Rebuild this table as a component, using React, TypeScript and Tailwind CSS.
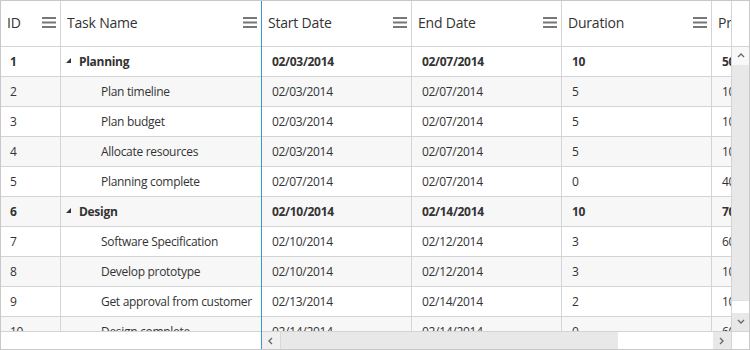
import React from "react";

type Row = {
  id: number;
  name: string;
  start: string;
  end: string;
  dur: string;
  prog: string;
  parent?: boolean;
};

const rows: Row[] = [
  { id: 1, name: "Planning", start: "02/03/2014", end: "02/07/2014", dur: "10", prog: "50", parent: true },
  { id: 2, name: "Plan timeline", start: "02/03/2014", end: "02/07/2014", dur: "5", prog: "100" },
  { id: 3, name: "Plan budget", start: "02/03/2014", end: "02/07/2014", dur: "5", prog: "100" },
  { id: 4, name: "Allocate resources", start: "02/03/2014", end: "02/07/2014", dur: "5", prog: "100" },
  { id: 5, name: "Planning complete", start: "02/07/2014", end: "02/07/2014", dur: "0", prog: "40" },
  { id: 6, name: "Design", start: "02/10/2014", end: "02/14/2014", dur: "10", prog: "70", parent: true },
  { id: 7, name: "Software Specification", start: "02/10/2014", end: "02/12/2014", dur: "3", prog: "60" },
  { id: 8, name: "Develop prototype", start: "02/10/2014", end: "02/12/2014", dur: "3", prog: "100" },
  { id: 9, name: "Get approval from customer", start: "02/13/2014", end: "02/14/2014", dur: "2", prog: "100" },
  { id: 10, name: "Design complete", start: "02/14/2014", end: "02/14/2014", dur: "0", prog: "60" },
];

function Menu() {
  return (
    <svg width="14" height="11" viewBox="0 0 14 11" className="shrink-0 -mt-[2px]">
      <rect x="0" y="0" width="14" height="2" fill="#777777" />
      <rect x="0" y="4.5" width="14" height="2" fill="#777777" />
      <rect x="0" y="9" width="14" height="2" fill="#777777" />
    </svg>
  );
}

function HeaderCell({ label, className }: { label: string; className: string }) {
  return (
    <div className={`flex items-center justify-between h-full pl-[6px] pr-[4px] border-r border-[#d4d4d4] shrink-0 ${className}`}>
      <span className="text-[14px] tracking-[-0.2px] text-[#333333] whitespace-nowrap overflow-hidden -mt-[2px]">{label}</span>
      <Menu />
    </div>
  );
}

function Chevron({ dir }: { dir: "up" | "down" | "left" | "right" }) {
  const pts: Record<string, string> = {
    up: "1,5 4,2 7,5",
    down: "1,2 4,5 7,2",
    left: "5,1 2,4 5,7",
    right: "2,1 5,4 2,7",
  };
  return (
    <svg width="8" height="8" viewBox="0 0 8 8">
      <polyline points={pts[dir]} fill="none" stroke="#6a6a6a" strokeWidth="1.4" />
    </svg>
  );
}

export default function App() {
  const rowBg = (i: number) => (i % 2 === 1 ? "bg-[#f7f7f7]" : "bg-white");
  return (
    <div
      className="w-[750px] h-[350px] border border-[#c8c8c8] flex bg-white text-[#333333]"
      style={{ fontFamily: '"Open Sans", "Noto Sans", sans-serif' }}
    >
      {/* Frozen left pane */}
      <div className="w-[261px] shrink-0 flex flex-col border-r border-[#3a94d8]">
        <div className="h-[46px] shrink-0 flex border-b border-[#d4d4d4]">
          <HeaderCell label="ID" className="w-[60px]" />
          <div className="flex items-center justify-between h-full pl-[6px] pr-[4px] flex-1">
            <span className="text-[14px] tracking-[-0.2px] text-[#333333] -mt-[2px]">Task Name</span>
            <Menu />
          </div>
        </div>
        <div className="flex-1 overflow-hidden">
          {rows.map((r, i) => (
            <div key={r.id} className={`h-[30px] flex border-b border-[#d4d4d4] text-[12px] tracking-[-0.3px] ${rowBg(i)} ${r.parent ? "font-bold" : ""}`}>
              <div className="w-[60px] shrink-0 border-r border-[#d4d4d4] flex items-center pl-[9px]">{r.id}</div>
              {r.parent ? (
                <div className="flex-1 flex items-center pl-[5px]">
                  <svg width="5" height="5" viewBox="0 0 5 5" className="mr-[8px] -mt-[2px]">
                    <polygon points="5,0 5,5 0,5" fill="#333333" />
                  </svg>
                  <span>{r.name}</span>
                </div>
              ) : (
                <div className="flex-1 flex items-center pl-[40px] whitespace-nowrap">{r.name}</div>
              )}
            </div>
          ))}
        </div>
        <div className="h-[18px] shrink-0 border-t border-[#d4d4d4] bg-white" />
      </div>

      {/* Movable right pane */}
      <div className="flex-1 flex flex-col min-w-0">
        <div className="h-[46px] shrink-0 flex border-b border-[#d4d4d4]">
          <div className="flex-1 flex overflow-hidden">
            <HeaderCell label="Start Date" className="w-[150px]" />
            <HeaderCell label="End Date" className="w-[150px]" />
            <HeaderCell label="Duration" className="w-[150px]" />
            <HeaderCell label="Progress" className="w-[150px]" />
          </div>
          <div className="w-[18px] shrink-0 border-l border-[#d4d4d4]" />
        </div>
        <div className="flex-1 flex min-h-0">
          <div className="flex-1 overflow-hidden">
            {rows.map((r, i) => (
              <div key={r.id} className={`h-[30px] flex border-b border-[#d4d4d4] text-[12px] tracking-[-0.3px] ${rowBg(i)} ${r.parent ? "font-bold" : ""}`}>
                <div className="w-[150px] shrink-0 border-r border-[#d4d4d4] flex items-center pl-[10px]">{r.start}</div>
                <div className="w-[150px] shrink-0 border-r border-[#d4d4d4] flex items-center pl-[10px]">{r.end}</div>
                <div className="w-[150px] shrink-0 border-r border-[#d4d4d4] flex items-center pl-[10px]">{r.dur}</div>
                <div className="w-[150px] shrink-0 border-r border-[#d4d4d4] flex items-center pl-[10px]">{r.prog}</div>
              </div>
            ))}
          </div>
          <div className="w-[18px] shrink-0 border-l border-[#d4d4d4] flex flex-col">
            <div className="h-[18px] shrink-0 flex items-center justify-center bg-[#f8f8f8]">
              <Chevron dir="up" />
            </div>
            <div className="flex-1 bg-[#e8e8e8]" />
            <div className="h-[13px] shrink-0 bg-white border-t border-[#e0e0e0]" />
            <div className="h-[18px] shrink-0 flex items-center justify-center bg-[#e8e8e8]">
              <Chevron dir="down" />
            </div>
          </div>
        </div>
        <div className="h-[18px] shrink-0 flex border-t border-[#d4d4d4]">
          <div className="flex-1 flex">
            <div className="w-[19px] shrink-0 flex items-center justify-center bg-[#f0f0f0] border-r border-[#d8d8d8]">
              <Chevron dir="left" />
            </div>
            <div className="w-[337px] shrink-0 bg-[#e8e8e8]" />
            <div className="flex-1 bg-white" />
            <div className="w-[18px] shrink-0 flex items-center justify-center bg-[#e8e8e8]">
              <Chevron dir="right" />
            </div>
          </div>
          <div className="w-[18px] shrink-0 border-l border-[#d4d4d4] bg-white" />
        </div>
      </div>
    </div>
  );
}
